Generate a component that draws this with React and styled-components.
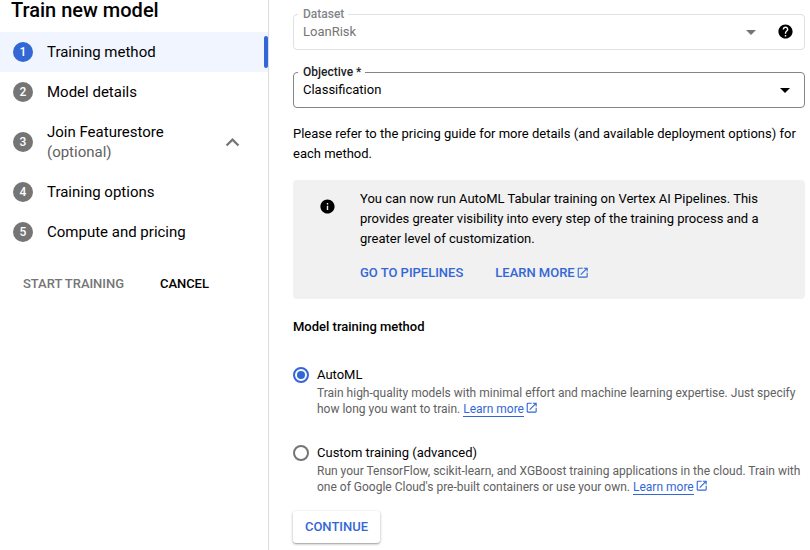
import React from "react";
import styled, { createGlobalStyle } from "styled-components";
import { MdArrowDropDown, MdExpandLess, MdHelp, MdInfo, MdOpenInNew } from "react-icons/md";

const BLUE = "#3367d6";

const GlobalStyle = createGlobalStyle`
  * { box-sizing: border-box; }
  body {
    margin: 0;
    background: #fff;
    color: #000;
    font-family: Roboto, "Liberation Sans", sans-serif;
    font-size: 13px;
    overflow: hidden;
  }
  svg { display: block; flex: none; }
`;

const Page = styled.div`
  display: flex;
  width: 810px;
  height: 550px;
  overflow: hidden;
`;

const Sidebar = styled.aside`
  width: 269px;
  flex: none;
  border-right: 1px solid #dadce0;
`;

const Title = styled.h1`
  margin: 0;
  height: 32px;
  padding-left: 11px;
  font-size: 20px;
  font-weight: 500;
  line-height: 21px;
  white-space: nowrap;
`;

const Step = styled.div`
  display: flex;
  align-items: center;
  height: ${(p) => (p.$tall ? 60 : 40)}px;
  padding-left: 13px;
  background: ${(p) => (p.$active ? "#f0f5ff" : "transparent")};
`;

const StepNumber = styled.span`
  width: 20px;
  height: 20px;
  margin-right: 14px;
  border-radius: 50%;
  background: ${(p) => (p.$active ? BLUE : "#757575")};
  color: #fff;
  font-size: 12px;
  font-weight: 500;
  line-height: 20px;
  text-align: center;
`;

const StepLabel = styled.div`
  flex: 1;
  font-size: 15px;
  line-height: 20px;
`;

const Optional = styled.div`
  color: #616161;
`;

const ActiveMarker = styled.span`
  width: 4px;
  height: 32px;
  background: ${BLUE};
  border-radius: 2px;
`;

const Chevron = styled(MdExpandLess)`
  width: 27px;
  height: 27px;
  margin-right: 22.5px;
  color: #757575;
`;

const SidebarActions = styled.div`
  display: flex;
  gap: 36px;
  padding: 22px 0 0 23px;
`;

const TextButton = styled.button`
  padding: 0;
  border: 0;
  background: none;
  color: ${(p) => (p.disabled ? "#757575" : "#000")};
  font: 500 13px/20px Roboto, sans-serif;
  letter-spacing: -0.04px;
`;

const Main = styled.main`
  width: 512px;
  margin-left: 24px;
  flex: none;
`;

const Field = styled.fieldset`
  display: flex;
  align-items: center;
  width: 512px;
  min-width: 0;
  height: 43px;
  margin: ${(p) => p.$top}px 0 0;
  padding: 0 11px 7px 9px;
  border: 1px solid ${(p) => (p.disabled ? "#e0e0e0" : "#80868b")};
  border-radius: 4px;
  color: ${(p) => (p.disabled ? "#757575" : "#000")};
`;

const FieldLabel = styled.legend`
  height: 14px;
  margin-left: -5px;
  padding: 0 4px 0 5px;
  color: ${(p) => (p.$muted ? "#80868b" : "#202124")};
  font-size: 12px;
  font-weight: 500;
  line-height: 14px;
`;

const FieldValue = styled.span`
  flex: 1;
  line-height: 20px;
`;

const Arrow = styled(MdArrowDropDown)`
  width: 24px;
  height: 24px;
  margin-right: ${(p) => p.$gap}px;
`;

const Help = styled(MdHelp)`
  width: 17px;
  height: 17px;
  margin-right: -0.5px;
  color: #000;
`;

const Paragraph = styled.p`
  margin: 0;
  line-height: 20px;
  white-space: nowrap;
`;

const Intro = styled(Paragraph)`
  margin-top: 16px;
`;

const Notice = styled.section`
  display: flex;
  gap: 24.5px;
  height: 119px;
  margin-top: 16px;
  padding: 9px 0 0 25.5px;
  border-radius: 4px;
  background: #f1f1f1;
`;

const NoticeIcon = styled(MdInfo)`
  width: 17px;
  height: 17px;
  margin-top: 8.5px;
`;

const NoticeLinks = styled.div`
  display: flex;
  gap: 32px;
  margin-top: 14px;
`;

const ActionLink = styled.a`
  display: flex;
  align-items: center;
  color: ${BLUE};
  font-weight: 500;
  line-height: 20px;
  letter-spacing: -0.01px;
`;

const External = styled(MdOpenInNew)`
  display: inline-block;
  width: 13.4px;
  height: 13.4px;
  margin: 0 0 1px 1.5px;
  color: ${BLUE};
  vertical-align: -2px;
`;

const Heading = styled.h2`
  margin: 18px 0 0;
  font-size: 13px;
  font-weight: 500;
  line-height: 20px;
`;

const Options = styled.div`
  display: grid;
  gap: 26px;
  margin-top: 28px;
`;

const Option = styled.label`
  display: flex;
  gap: 8px;
`;

const RadioMark = styled.span`
  display: grid;
  place-items: center;
  flex: none;
  width: 16px;
  height: 16px;
  margin-top: 2px;
  border: 2px solid ${(p) => (p.$checked ? BLUE : "#757575")};
  border-radius: 50%;

  &::after {
    content: "";
    width: 8px;
    height: 8px;
    border-radius: 50%;
    background: ${(p) => (p.$checked ? BLUE : "transparent")};
  }
`;

const OptionText = styled.div`
  line-height: 20px;
  white-space: nowrap;
`;

const Description = styled.div`
  height: 32px;
  color: #616161;
  font-size: 12px;
  line-height: 16px;
`;

const InlineLink = styled.a`
  display: inline-block;
  height: 16px;
  border-bottom: 1px solid ${BLUE};
  color: ${BLUE};
  vertical-align: top;
`;

const ContinueButton = styled.button`
  display: block;
  width: 87px;
  height: 32px;
  margin-top: 16px;
  padding: 0;
  border: 0;
  border-radius: 3px;
  background: #fff;
  box-shadow: 0 1px 3px rgba(0, 0, 0, 0.3), 0 1px 1px rgba(0, 0, 0, 0.14);
  color: ${BLUE};
  font: 500 13px/32px Roboto, sans-serif;
`;

const steps = [
  { label: "Training method", active: true },
  { label: "Model details" },
  { label: "Join Featurestore", optional: true },
  { label: "Training options" },
  { label: "Compute and pricing" },
];

const methods = [
  {
    name: "AutoML",
    checked: true,
    lines: [
      "Train high-quality models with minimal effort and machine learning expertise. Just specify",
      "how long you want to train.",
    ],
  },
  {
    name: "Custom training (advanced)",
    lines: [
      "Run your TensorFlow, scikit-learn, and XGBoost training applications in the cloud. Train with",
      "one of Google Cloud's pre-built containers or use your own.",
    ],
  },
];

export default function App() {
  return (
    <>
      <GlobalStyle />
      <Page>
        <Sidebar>
          <Title>Train new model</Title>
          {steps.map((step, i) => (
            <Step key={step.label} $active={step.active} $tall={step.optional}>
              <StepNumber $active={step.active}>{i + 1}</StepNumber>
              <StepLabel>
                {step.label}
                {step.optional && <Optional>(optional)</Optional>}
              </StepLabel>
              {step.active && <ActiveMarker />}
              {step.optional && <Chevron />}
            </Step>
          ))}
          <SidebarActions>
            <TextButton disabled>START TRAINING</TextButton>
            <TextButton>CANCEL</TextButton>
          </SidebarActions>
        </Sidebar>
        <Main>
          <Field disabled $top={7}>
            <FieldLabel $muted>Dataset</FieldLabel>
            <FieldValue>LoanRisk</FieldValue>
            <Arrow $gap={14} />
            <Help />
          </Field>
          <Field $top={15}>
            <FieldLabel>Objective *</FieldLabel>
            <FieldValue>Classification</FieldValue>
            <Arrow $gap={-4} />
          </Field>
          <Intro>
            Please refer to the pricing guide for more details (and available deployment options) for
            <br />
            each method.
          </Intro>
          <Notice>
            <NoticeIcon />
            <div>
              <Paragraph>
                You can now run AutoML Tabular training on Vertex AI Pipelines. This
                <br />
                provides greater visibility into every step of the training process and a
                <br />
                greater level of customization.
              </Paragraph>
              <NoticeLinks>
                <ActionLink>GO TO PIPELINES</ActionLink>
                <ActionLink>
                  LEARN MORE
                  <External />
                </ActionLink>
              </NoticeLinks>
            </div>
          </Notice>
          <Heading>Model training method</Heading>
          <Options>
            {methods.map((method) => (
              <Option key={method.name}>
                <RadioMark $checked={method.checked} />
                <OptionText>
                  {method.name}
                  <Description>
                    {method.lines[0]}
                    <br />
                    {method.lines[1]} <InlineLink>Learn more</InlineLink>
                    <External />
                  </Description>
                </OptionText>
              </Option>
            ))}
          </Options>
          <ContinueButton>CONTINUE</ContinueButton>
        </Main>
      </Page>
    </>
  );
}
